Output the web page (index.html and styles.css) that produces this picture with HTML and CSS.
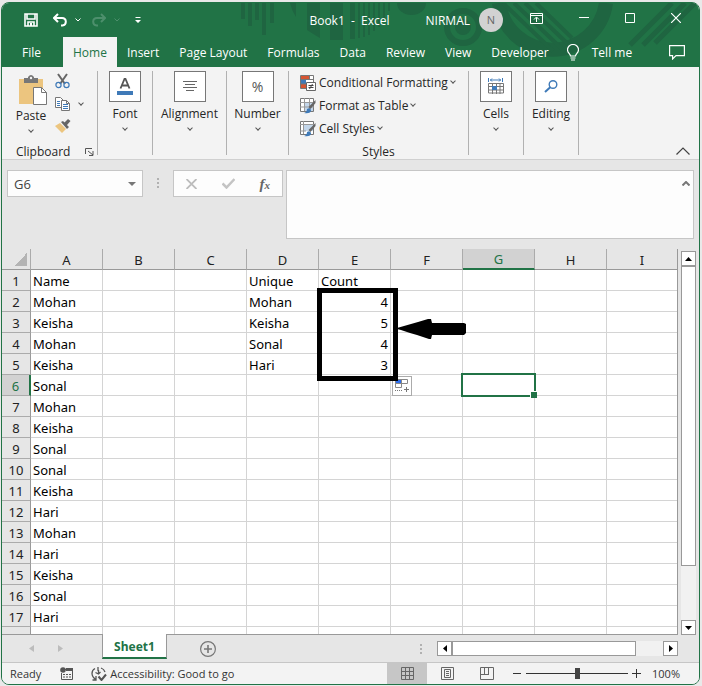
FILE: index.html
```html
<!DOCTYPE html>
<html lang="en">
<head>
    <meta charset="UTF-8">
    <meta name="viewport" content="width=device-width, initial-scale=1.0">
    <title>Book1 - Excel</title>
    <link rel="stylesheet" href="styles.css">
</head>
<body>

<div class="window">
    <header class="header">
        <svg class="pattern" width="697" height="64" viewBox="2 3 697 64" aria-hidden="true">
            <g fill="#1f6541">
                <path d="M241 3h4v16h-4zM248 3h4v23h-4zM255 3h4v17h-4zM262 3h4v32h-4zM270 3h4v20h-4z"/>
                <path d="M290 3h6v14q-4-6-6-14zM307 3h13v35q-7-4-13-8zM330 3h13v37h-13zM350 3h5v36h-5zM358 3h2v35h-2zM363 3h2v34h-2zM368 3h2v32h-2zM373 3h2v28h-2zM378 3h2v24h-2zM383 3h2v17h-2zM388 3h2v8h-2z"/>
                <path d="M397 3h29a14.500 12 0 0 1-29 0z"/>
                <circle cx="463" cy="27" r="8"/>
            </g>
            <g fill="none" stroke="#1f6541">
                <circle cx="463" cy="27" r="16" stroke-width="6"/>
                <path d="M499 3a54 54 0 0 0 107 0" stroke-width="14"/>
                <path d="M503 3l50 48M514 3l48 46M525 3l44 42M536 3l36 35" stroke-width="4"/>
                <path d="M630 45l42-42M643 45l42-42M655 43l40-40" stroke-width="5"/>
            </g>
        </svg>

        <div class="titlebar">
            <div class="quick">
                <button aria-label="Save"><svg width="14" height="14" viewBox="0 0 14 14"><path d="M1 1h12v12H1zM3 1v5h8V1M4 13V9h6v4" fill="none" stroke="#fff" stroke-width="1.600"/><path d="M6 10h2v3H6z" fill="#fff"/></svg></button>
                <button class="undo" aria-label="Undo"><svg width="14" height="14" viewBox="0 0 14 14"><path d="M5 1L1 5l4 4M1.500 5H9c5 0 5 7 .5 7.500H8" fill="none" stroke="#fff" stroke-width="2"/></svg></button>
                <button aria-label="Undo list"><svg width="6" height="4" viewBox="0 0 6 4"><path d="M.5.5L3 3 5.500.5" fill="none" stroke="#fff"/></svg></button>
                <button class="redo" aria-label="Redo"><svg width="14" height="14" viewBox="0 0 14 14"><path d="M9 1l4 4-4 4M12.500 5H5c-5 0-5 7-.5 7.500H6" fill="none" stroke="#4d8f6c" stroke-width="2"/></svg></button>
                <button aria-label="Redo list"><svg width="6" height="4" viewBox="0 0 6 4"><path d="M.5.5L3 3 5.500.5" fill="none" stroke="#4d8f6c"/></svg></button>
                <button class="customize" aria-label="Customize toolbar"><svg width="6" height="7" viewBox="0 0 6 7"><path d="M.5 0h5v1h-5zM0 3h6L3 6z" fill="#fff"/></svg></button>
            </div>
            <span class="doc">Book1&nbsp; -&nbsp; Excel</span>
            <span class="user">NIRMAL</span>
            <span class="avatar">N</span>
            <div class="controls">
                <button aria-label="Ribbon display options"><svg width="13" height="11" viewBox="0 0 13 11"><path d="M.5.5h12v10H.5zM.5 2.500h12M6.500 9V4.500M4 6.500l2.500-2.500L9 6.500" fill="none" stroke="#fff"/></svg></button>
                <button aria-label="Minimize"><svg width="10" height="10" viewBox="0 0 10 10"><path d="M0 4.500h10" stroke="#fff"/></svg></button>
                <button aria-label="Maximize"><svg width="10" height="10" viewBox="0 0 10 10"><path d="M.5.5h9v9h-9z" fill="none" stroke="#fff"/></svg></button>
                <button aria-label="Close"><svg width="10" height="10" viewBox="0 0 10 10"><path d="M0 0l10 10M10 0L0 10" stroke="#fff" stroke-width="1.200"/></svg></button>
            </div>
        </div>

        <nav class="tabs">
            <button class="file">File</button>
            <button class="active">Home</button>
            <button>Insert</button>
            <button>Page Layout</button>
            <button>Formulas</button>
            <button>Data</button>
            <button>Review</button>
            <button>View</button>
            <button>Developer</button>
            <button class="tell"><svg width="12" height="17" viewBox="0 0 12 17"><path d="M3.500 12c0-2-3-3-3-6.300a5.500 5.200 0 0 1 11 0c0 3.300-3 4.300-3 6.300zM3.500 14h5M4 16h4" fill="none" stroke="#fff" stroke-width="1.200"/></svg>Tell me</button>
            <button class="comment" aria-label="Comments"><svg width="16" height="15" viewBox="0 0 16 15"><path d="M.6.6h14.800v10H7L3.600 14v-3.400h-3z" fill="none" stroke="#fff" stroke-width="1.200"/></svg></button>
        </nav>
    </header>

    <section class="ribbon">
        <div class="group clipboard">
            <div class="clip-tools">
                <button class="paste">
                    <svg width="28" height="31" viewBox="0 0 28 31"><path d="M0 4h24v25H0z" fill="#ecc57f"/><path d="M5 8V3h4V2q3-4 6 0v1h4v5z" fill="#777"/><circle cx="12" cy="3" r="1.200" fill="#f3f3f3"/><path d="M14.500 12.500h8l5 5v12h-13z" fill="#fff" stroke="#777"/><path d="M22.500 12.500v5h5" fill="none" stroke="#777"/></svg>
                    <span>Paste</span>
                    <i class="chev"></i>
                </button>
                <div class="clip-side">
                    <button aria-label="Cut"><svg width="15" height="16" viewBox="0 0 15 16"><path d="M3 1l7 10M12 1L5 11" stroke="#666" stroke-width="2"/><circle cx="3.500" cy="12" r="2.600" fill="none" stroke="#3f7ab8" stroke-width="1.200"/><circle cx="11.500" cy="12" r="2.600" fill="none" stroke="#3f7ab8" stroke-width="1.200"/></svg></button>
                    <button class="copy" aria-label="Copy"><svg width="15" height="14" viewBox="0 0 15 14"><path d="M.5.500h5l3 3v7h-8z" fill="#fff" stroke="#777"/><path d="M2 4.500h3M2 6.500h3M2 8.500h3" stroke="#3f7ab8"/><path d="M6.500 3.500h5l3 3v7h-8z" fill="#fff" stroke="#777"/><path d="M11.500 3.500v3h3" fill="none" stroke="#777"/><path d="M8 7.500h5M8 9.500h5M8 11.500h5" stroke="#3f7ab8"/></svg><i class="chev"></i></button>
                    <button aria-label="Format painter"><svg width="16" height="14" viewBox="0 0 16 14"><path d="M5 4l6 6-4 4-7-7z" fill="#ecc57f"/><path d="M6 3l2-1 6 6-2 2zM9 4l4-4 2.500 2L12 6z" fill="#666"/></svg></button>
                </div>
            </div>
            <div class="group-name">Clipboard <svg width="9" height="8" viewBox="0 0 9 8"><path d="M.5 6V.5H7M3 3l5 4M8 3v4.500H4" fill="none" stroke="#555"/></svg></div>
        </div>
        <div class="group narrow">
            <button class="big">
                <span class="box"><svg width="16" height="17" viewBox="0 0 16 17"><path d="M3.500 10.500L7.500 1h1l4 9.500M5 7.500h6" fill="none" stroke="#555" stroke-width="1.800"/><path d="M0 13h16v4H0z" fill="#3f7ab8"/></svg></span>
                <span>Font</span><i class="chev"></i>
            </button>
        </div>
        <div class="group middle">
            <button class="big">
                <span class="box"><svg width="14" height="11" viewBox="0 0 14 11"><path d="M0 .5h14M2 3.500h10M0 6.500h14M3 9.500h8" stroke="#666"/></svg></span>
                <span>Alignment</span><i class="chev"></i>
            </button>
        </div>
        <div class="group number">
            <button class="big">
                <span class="box percent">%</span>
                <span>Number</span><i class="chev"></i>
            </button>
        </div>
        <div class="group styles">
            <button><svg width="16" height="16" viewBox="0 0 16 16"><path d="M.5.5h13v13H.5z" fill="#fff" stroke="#777"/><path d="M1 1h8v3H1zM1 9h5v4H1z" fill="#d65532"/><path d="M1 5h5v4H1z" fill="#3f7ab8"/><path d="M9.500 0v5M.5 4.500h13M.5 9h6" stroke="#777"/><path d="M6.500 7.500h9v8h-9z" fill="#fff" stroke="#666"/><path d="M8.500 10.500h5M8.500 12.500h5M12.500 9l-3 5" stroke="#444"/></svg>Conditional Formatting<i class="chev"></i></button>
            <button><svg width="16" height="16" viewBox="0 0 16 16"><path d="M.5.5h13v13H.5z" fill="#fff" stroke="#777"/><path d="M5 5h8v8H5z" fill="#c3d6ea"/><path d="M4.500 0v13M9.500 0v13M0 4.500h14M0 9h14" stroke="#999"/><path d="M15.500 2v3l-5 6-2-2z" fill="#666"/><path d="M4 15q3-1 3-4 3-2 4 1 0 4-7 3z" fill="#3f7ab8"/></svg>Format as Table<i class="chev"></i></button>
            <button><svg width="16" height="16" viewBox="0 0 16 16"><path d="M.5.5h13v13H.5z" fill="#fff" stroke="#777"/><path d="M3 4h10v6H3z" fill="#c3d6ea"/><path d="M3.500 0v13M0 3.500h14M0 10h6" stroke="#999"/><path d="M15.500 2v3l-5 6-2-2z" fill="#666"/><path d="M4 15q3-1 3-4 3-2 4 1 0 4-7 3z" fill="#3f7ab8"/></svg>Cell Styles<i class="chev"></i></button>
            <div class="group-name">Styles</div>
        </div>
        <div class="group narrow">
            <button class="big">
                <span class="box"><svg width="16" height="17" viewBox="0 0 16 17"><path d="M.5 0v4M14.500 0v4M2 2h11M4 .5L2.500 2 4 3.500M11 .5L12.500 2 11 3.500" fill="none" stroke="#3f7ab8"/><path d="M.5 5.500h15v9.500H.5zM4.500 5v11M8.500 5v11M12 5v11M0 8.500h16M0 12h16" fill="none" stroke="#777"/><path d="M4 8h5v4H4z" fill="#3f7ab8"/></svg></span>
                <span>Cells</span><i class="chev"></i>
            </button>
        </div>
        <div class="group narrow">
            <button class="big">
                <span class="box"><svg width="14" height="13" viewBox="0 0 14 13"><circle cx="9" cy="4.500" r="3.800" fill="none" stroke="#3f7ab8" stroke-width="1.400"/><path d="M6.500 7L1 12" stroke="#3f7ab8" stroke-width="2"/></svg></span>
                <span>Editing</span><i class="chev"></i>
            </button>
        </div>
        <button class="collapse" aria-label="Collapse the ribbon"><svg width="14" height="8" viewBox="0 0 14 8"><path d="M.5 7.500L7 1l6.500 6.500" fill="none" stroke="#444" stroke-width="1.200"/></svg></button>
    </section>

    <section class="formula-row">
        <div class="name-box">
            <input type="text" value="G6" aria-label="Name box">
            <svg width="8" height="4" viewBox="0 0 8 4"><path d="M0 0h8L4 4z" fill="#777"/></svg>
        </div>
        <span class="dots"></span>
        <div class="fx">
            <button aria-label="Cancel"><svg width="11" height="10" viewBox="0 0 11 10"><path d="M.5 0l10 10M10.500 0l-10 10" stroke="#bdbdbd" stroke-width="1.800"/></svg></button>
            <button aria-label="Enter"><svg width="13" height="11" viewBox="0 0 13 11"><path d="M.5 5.500L4.500 9.500 12.500 1" fill="none" stroke="#c4c4c4" stroke-width="2.500"/></svg></button>
            <button class="fx-label" aria-label="Insert function">f<sub>x</sub></button>
        </div>
        <div class="formula">
            <textarea aria-label="Formula bar"></textarea>
            <svg width="8" height="5" viewBox="0 0 8 5"><path d="M.5 4.500L4 1l3.500 3.500" fill="none" stroke="#777" stroke-width="2"/></svg>
        </div>
    </section>

    <main class="sheet">
        <div class="grid">
            <table>
                <thead>
                    <tr><th class="corner"></th><th>A</th><th>B</th><th>C</th><th>D</th><th>E</th><th>F</th><th class="on">G</th><th>H</th><th>I</th></tr>
                </thead>
                <tbody id="rows"></tbody>
            </table>
            <div class="mark"></div>
            <svg class="arrow" width="70" height="20" viewBox="0 0 70 20"><path d="M0 9l14-4 7-2 10-3h3l1 4h32l2 1v9l-2 2H35l-1 4h-2l-12-4-7-2-9-3-4-1z"/></svg>
            <button class="fill" aria-label="Auto fill options"><svg width="14" height="14" viewBox="0 0 14 14"><path d="M.5.5h12v4H.5zM6.500.5v4M.5 4.500h6v4h-6z" fill="#fff" stroke="#888"/><path d="M1 1h5v3H1z" fill="#2f6fed"/><path d="M0 11.500h8" stroke="#777" stroke-dasharray="1 1"/><path d="M9 10.500h5M11.500 8v5" stroke="#777"/></svg></button>
        </div>
        <div class="vscroll">
            <button aria-label="Scroll up"><svg width="7" height="4" viewBox="0 0 7 4"><path d="M0 4h7L3.500 0z"/></svg></button>
            <div class="thumb"></div>
            <button aria-label="Scroll down"><svg width="7" height="4" viewBox="0 0 7 4"><path d="M0 0h7L3.500 4z"/></svg></button>
        </div>
    </main>

    <section class="sheet-bar">
        <div class="sheet-nav">
            <svg width="5" height="7" viewBox="0 0 5 7"><path d="M5 0v7L0 3.500z" fill="#bcbcbc"/></svg>
            <svg width="5" height="7" viewBox="0 0 5 7"><path d="M0 0v7l5-3.500z" fill="#bcbcbc"/></svg>
        </div>
        <button class="sheet-tab">Sheet1</button>
        <button class="add" aria-label="New sheet"><svg width="16" height="16" viewBox="0 0 16 16"><circle cx="8" cy="8" r="7.400" fill="none" stroke="#777" stroke-width="1.200"/><path d="M8 4v8M4 8h8" stroke="#777" stroke-width="1.600"/></svg></button>
        <span class="dots"></span>
        <div class="hscroll">
            <button aria-label="Scroll left"><svg width="4" height="7" viewBox="0 0 4 7"><path d="M4 0v7L0 3.500z"/></svg></button>
            <div class="thumb"></div>
            <button aria-label="Scroll right"><svg width="4" height="7" viewBox="0 0 4 7"><path d="M0 0v7l4-3.500z"/></svg></button>
        </div>
    </section>

    <footer class="status">
        <span class="ready">Ready</span>
        <svg class="macro" width="13" height="13" viewBox="0 0 13 13"><path d="M5 2.500h7.500v10H1.500V6" fill="none" stroke="#555"/><path d="M6 1h7v3H6z" fill="#555"/><circle cx="3" cy="3" r="2.800" fill="#555"/><path d="M3 7.500h2M6 7.500h2M9 7.500h2M3 10h2M6 10h2M9 10h2" stroke="#555" stroke-width="1.200"/></svg>
        <svg width="16" height="14" viewBox="0 0 16 14"><path d="M4 1.500Q1 3 1 6.500t4 6M5 9v4H1.500M7 0v4M10 1q3 1 4 4M4.500 5.500L7.500 7l2-2M7.500 3v4" fill="none" stroke="#555" stroke-width="1.300"/><path d="M7.500 9.500l3 3.500L15 7.500" fill="none" stroke="#555" stroke-width="2"/></svg>
        <span class="access">Accessibility: Good to go</span>
        <div class="views">
            <button class="on" aria-label="Normal"><svg width="13" height="13" viewBox="0 0 13 13"><path d="M.5.5h12v12H.5zM4.500 0v13M8.500 0v13M0 4.500h13M0 8.500h13" fill="none" stroke="#666"/></svg></button>
            <button aria-label="Page layout"><svg width="13" height="13" viewBox="0 0 13 13"><path d="M.5.5h12v12H.5zM3.500 2.500h6v8h-6zM5 4.500h3M5 6.500h3M5 8.500h3" fill="none" stroke="#666"/></svg></button>
            <button aria-label="Page break preview"><svg width="14" height="13" viewBox="0 0 14 13"><path d="M.5.5h13v12H.5zM4.500 0v7M8.500 0v7M0 7.500h9" fill="none" stroke="#666"/></svg></button>
        </div>
        <button aria-label="Zoom out"><svg width="9" height="9" viewBox="0 0 9 9"><path d="M0 4.500h8" stroke="#333"/></svg></button>
        <input type="range" min="0" max="100" value="50" aria-label="Zoom">
        <button aria-label="Zoom in"><svg width="9" height="9" viewBox="0 0 9 9"><path d="M0 4.500h9M4.500 0v9" stroke="#333"/></svg></button>
        <span class="percent-text">100%</span>
    </footer>
</div>

<script>
    const names = ["Name", "Mohan", "Keisha", "Mohan", "Keisha", "Sonal", "Mohan", "Keisha", "Sonal",
        "Sonal", "Keisha", "Hari", "Mohan", "Hari", "Keisha", "Sonal", "Hari", ""];
    const unique = ["Unique", "Mohan", "Keisha", "Sonal", "Hari"];
    const count = ["Count", 4, 5, 4, 3];
    const rows = document.getElementById("rows");

    for (let i = 0; i < names.length; i++) {
        const tr = document.createElement("tr");
        const num = document.createElement("th");
        num.textContent = i + 1;
        if (i === 5) num.className = "on";
        tr.appendChild(num);

        const cells = [names[i], "", "", unique[i] || "", count[i] || "", "", "", "", ""];
        cells.forEach((value, col) => {
            const td = document.createElement("td");
            td.textContent = value;
            if (typeof value === "number") td.classList.add("num");
            if (i === 5 && col === 6) td.classList.add("selected");
            tr.appendChild(td);
        });
        rows.appendChild(tr);
    }
</script>

</body>
</html>
```
FILE: styles.css
```css
* {
    box-sizing: border-box;
}
body {
    margin: 0;
    padding: 2px 2px 1px 1px;
    height: 100vh;
    background: #e9e9e9;
    font-family: "Open Sans", "Noto Sans", sans-serif;
    font-size: 12px;
    color: #262626;
}
button {
    background: none;
    border: none;
    padding: 0;
    margin: 0;
    font: inherit;
    color: inherit;
    cursor: pointer;
}
svg {
    display: block;
    flex: none;
}
.window {
    height: 100%;
    display: flex;
    flex-direction: column;
    border: 1px solid #217346;
    border-radius: 8px;
    background: #e6e6e6;
    overflow: hidden;
}

/* title bar and tabs */
.header {
    position: relative;
    background: #217346;
    color: white;
    flex: none;
}
.pattern {
    position: absolute;
    top: 0;
    right: 0;
}
.titlebar {
    position: relative;
    display: flex;
    align-items: center;
    height: 34px;
    padding: 0 18px 0 22px;
    white-space: nowrap;
}
.quick {
    display: flex;
    align-items: center;
    flex: 1;
}
.undo {
    margin: 0 8px 0 15px;
}
.redo {
    margin: 0 8px 0 11px;
}
.customize {
    margin-left: 15px;
}
.user {
    margin-left: 36px;
}
.avatar {
    width: 24px;
    height: 24px;
    margin: 0 27px 0 9px;
    border-radius: 50%;
    background: #d2d2d2;
    color: #666;
    font-size: 11px;
    line-height: 24px;
    text-align: center;
}
.controls {
    display: flex;
    align-items: center;
    align-self: flex-start;
    gap: 36px;
    height: 30px;
}
.tabs {
    position: relative;
    display: flex;
    height: 30px;
    padding: 0 14px 0 9px;
    white-space: nowrap;
}
.tabs button {
    padding: 0 10px;
}
.tabs .file {
    padding: 0 22px 0 11px;
}
.tabs .active {
    background: #f3f3f3;
    color: #217346;
}
.tabs .tell {
    display: flex;
    align-items: center;
    gap: 13px;
    padding-left: 8px;
}
.tabs .comment {
    margin-left: auto;
    padding: 0;
}

/* ribbon */
.ribbon {
    display: flex;
    flex: none;
    height: 93px;
    padding: 4px 9px 4px 0;
    background: #f3f3f3;
    border-bottom: 1px solid #d0d0d0;
    white-space: nowrap;
}
.group {
    display: flex;
    flex-direction: column;
    border-right: 1px solid #b1b1b1;
}
.clipboard {
    width: 96px;
}
.narrow {
    width: 55px;
}
.middle {
    width: 74px;
}
.number {
    width: 62px;
}
.styles {
    width: 180px;
    padding-left: 11px;
}
.chev {
    display: block;
    width: 4px;
    height: 4px;
    border: solid #555;
    border-width: 0 1px 1px 0;
    transform: rotate(45deg);
}
.big {
    display: flex;
    flex-direction: column;
    align-items: center;
    line-height: 24px;
}
.box {
    display: flex;
    align-items: center;
    justify-content: center;
    width: 32px;
    height: 31px;
    border: 1px solid #777;
    background: white;
}
.percent {
    font-size: 14px;
    color: #555;
}
.clip-tools {
    display: flex;
    flex: 1;
}
.paste {
    display: flex;
    flex-direction: column;
    align-items: center;
    width: 58px;
    padding-top: 4px;
    line-height: 19px;
}
.paste svg {
    margin-left: 4px;
}
.paste .chev {
    margin-top: 3px;
}
.clip-side {
    display: flex;
    flex-direction: column;
    gap: 8px;
    margin-left: -5px;
    padding-top: 2px;
}
.copy {
    display: flex;
    align-items: center;
    gap: 9px;
}
.copy .chev,
.styles .chev {
    margin-bottom: 3px;
}
.group-name {
    display: flex;
    align-items: center;
    justify-content: space-between;
    height: 10px;
    margin: auto 0 -2px;
    padding: 0 3px 0 14px;
    line-height: 10px;
}
.styles .group-name {
    justify-content: center;
    padding: 0 11px 0 0;
}
.styles button {
    display: flex;
    align-items: center;
    gap: 3px;
    height: 23px;
}
.collapse {
    align-self: flex-end;
    margin-left: auto;
}

/* formula bar */
.formula-row {
    display: flex;
    align-items: flex-start;
    flex: none;
    padding: 10px 5px;
}
.name-box,
.fx,
.formula {
    display: flex;
    align-items: center;
    height: 27px;
    border: 1px solid #c6c6c6;
    background: #fdfdfd;
}
.name-box {
    width: 136px;
    padding: 0 6px;
}
.name-box input,
.formula textarea {
    flex: 1;
    min-width: 0;
    border: none;
    padding: 0;
    background: none;
    font: inherit;
    font-size: 13px;
    color: #444;
    outline: none;
    resize: none;
}
.dots {
    width: 2px;
    height: 10px;
    background: repeating-linear-gradient(#b1b1b1 0 2px, transparent 2px 4px);
}
.formula-row .dots {
    margin: 8px 14px;
}
.fx {
    width: 110px;
    padding: 0 12px;
    justify-content: space-between;
}
.fx-label {
    font-family: "Liberation Serif", serif;
    font-style: italic;
    font-weight: bold;
    font-size: 15px;
    line-height: 16px;
    color: #666;
}
.fx-label sub {
    font-size: 11px;
    line-height: 0;
    vertical-align: baseline;
}
.formula {
    flex: 1;
    align-items: flex-start;
    height: 69px;
    margin-left: 3px;
    padding: 10px 3px 0 8px;
}
.formula textarea {
    height: 50px;
}

/* worksheet */
.sheet {
    display: flex;
    flex: 1;
    min-height: 0;
    padding-right: 3px;
}
.grid {
    position: relative;
    flex: 1;
    overflow: hidden;
    border-right: 1px solid #999;
    border-bottom: 1px solid #999;
}
table {
    width: 100%;
    table-layout: fixed;
    border-collapse: separate;
    border-spacing: 0;
    background: white;
    font-family: "Noto Sans", sans-serif;
    font-size: 13px;
    color: black;
}
th,
td {
    width: 72px;
    height: 21px;
    padding: 2px 2px 0;
    border-right: 1px solid #d4d4d4;
    border-bottom: 1px solid #d4d4d4;
    line-height: 18px;
    text-align: left;
    white-space: nowrap;
}
th {
    background: #e6e6e6;
    border-color: #ababab;
    color: #222;
    font-weight: normal;
    text-align: center;
}
thead th {
    border-bottom-color: #999;
}
thead th:last-child {
    width: auto;
}
tr > :last-child {
    border-right: none;
}
tbody th {
    border-right-color: #999;
}
thead .on,
tbody .on {
    background: #d2d2d2;
    color: #217346;
}
thead .on {
    border-bottom: 2px solid #217346;
    line-height: 17px;
}
tbody .on {
    border-right: 2px solid #217346;
}
.corner {
    width: 29px;
    background: linear-gradient(135deg, transparent 50%, #b4b4b4 50%) 12px 4px / 13px 13px no-repeat #e6e6e6;
}
.num {
    text-align: right;
}
.selected {
    position: relative;
}
.selected::before {
    content: "";
    position: absolute;
    inset: -2px;
    border: 2px solid #217346;
}
.selected::after {
    content: "";
    position: absolute;
    right: -3px;
    bottom: -3px;
    width: 6px;
    height: 6px;
    border: solid white;
    border-width: 1px 0 0 1px;
    background: #217346;
}
.mark {
    position: absolute;
    left: 315px;
    top: 39px;
    z-index: 1;
    width: 81px;
    height: 93px;
    border: 5px solid black;
}
.arrow {
    position: absolute;
    left: 395px;
    top: 70px;
}
.fill {
    position: absolute;
    left: 390px;
    top: 127px;
    width: 20px;
    height: 20px;
    padding: 2px;
    border: 1px solid #ababab;
    background: white;
}

/* scroll bars */
.vscroll,
.hscroll {
    display: flex;
    background: #f1f1f1;
}
.vscroll {
    flex-direction: column;
    width: 15px;
    margin: 2px 0 0 3px;
}
.hscroll {
    width: 241px;
    height: 15px;
}
.vscroll button,
.hscroll button {
    display: flex;
    align-items: center;
    justify-content: center;
    flex: none;
    width: 15px;
    height: 15px;
    border: 1px solid #999;
    background: white;
}
.vscroll button:last-child,
.hscroll button:last-child {
    margin: auto 0 0 auto;
}
.thumb {
    border: 1px solid #999;
    background: white;
}
.vscroll .thumb {
    height: 78%;
}
.hscroll .thumb {
    width: 184px;
}

/* sheet tabs */
.sheet-bar {
    display: flex;
    align-items: center;
    flex: none;
    height: 27px;
    padding-right: 21px;
}
.sheet-nav {
    display: flex;
    gap: 24px;
    width: 100px;
    padding-left: 27px;
}
.sheet-tab {
    position: relative;
    align-self: flex-start;
    width: 65px;
    height: 25px;
    margin-top: -1px;
    padding-top: 2px;
    border: solid #999;
    border-width: 0 1px;
    border-bottom: 2px solid #217346;
    background: white;
    color: #217346;
    font-family: "Noto Sans", sans-serif;
    font-size: 12px;
    font-weight: bold;
}
.add {
    margin: 0 auto 0 33px;
}
.sheet-bar .dots {
    margin-right: 15px;
}

/* status bar */
.status {
    display: flex;
    align-items: center;
    flex: none;
    height: 22px;
    padding: 0 19px 0 8px;
    border-top: 1px solid #c6c6c6;
    background: #f3f3f3;
    font-size: 11px;
    color: #333;
    white-space: nowrap;
}
.macro {
    margin: 0 18px 0 19px;
}
.access {
    margin: 0 auto 0 3px;
}
.views {
    display: flex;
    height: 100%;
    margin-right: 6px;
}
.views button {
    display: flex;
    align-items: center;
    justify-content: center;
    width: 40px;
    height: 100%;
}
.views .on {
    background: #c6c6c6;
}
.status input {
    appearance: none;
    width: 102px;
    height: 11px;
    margin: 0 4px;
    background: linear-gradient(#333, #333) center / 100% 1px no-repeat;
}
.status input::-webkit-slider-thumb {
    appearance: none;
    width: 5px;
    height: 11px;
    background: #444;
}
.percent-text {
    margin-left: 11px;
}
```
